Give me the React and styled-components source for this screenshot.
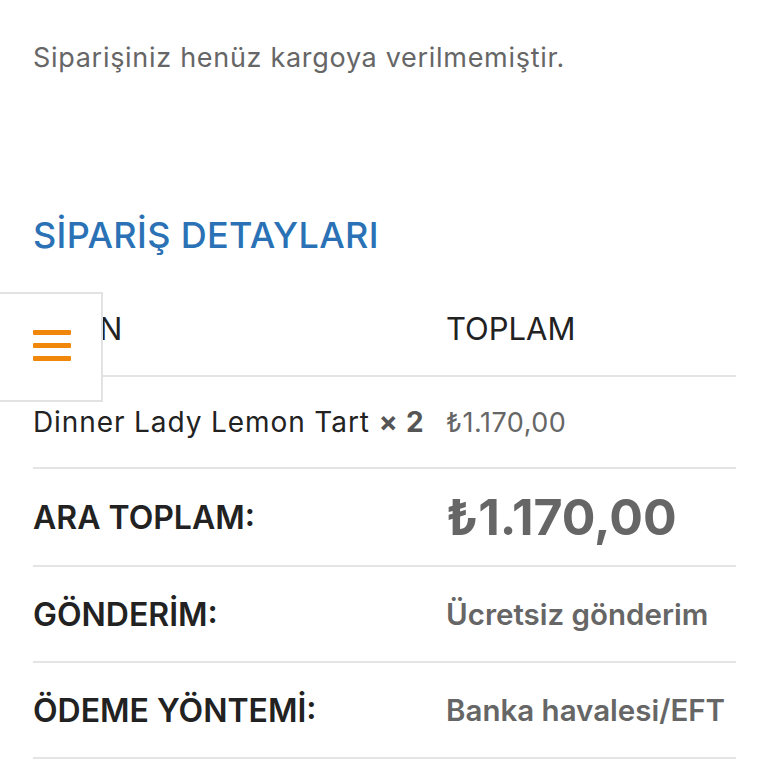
import React from 'react';
import styled, {createGlobalStyle} from 'styled-components';

const GlobalStyle = createGlobalStyle`
  body {
    margin: 0;
    background: #fff;
    font-family: Inter, "Noto Sans", sans-serif;
    overflow: hidden;
  }
`;

const Page = styled.div`
  padding: 38px 32px 0 33px;
`;

const Notice = styled.p`
  margin: 0;
  font-size: 27px;
  line-height: 40px;
  color: #666;
  letter-spacing: 0.7px;
`;

const Heading = styled.h2`
  margin: 134px 0 0;
  font-size: 36px;
  line-height: 46px;
  font-weight: 500;
  color: #2a72b5;
  letter-spacing: 0.35px;
`;

const Table = styled.table`
  width: 703px;
  margin-top: 24px;
  border-collapse: collapse;
`;

const Row = styled.tr`
  height: ${(p) => p.$h}px;
  border-bottom: 2px solid #e4e4e4;
`;

const Cell = styled.td`
  padding: 0;
  width: ${(p) => p.$w || 'auto'};
  vertical-align: middle;
  font-size: ${(p) => p.$size || 27}px;
  font-weight: ${(p) => p.$weight || 400};
  color: ${(p) => p.$color || '#222'};
  letter-spacing: ${(p) => p.$spacing || 0}px;
  white-space: nowrap;
`;

const Qty = styled.strong`
  color: #555;
  font-weight: 700;
`;

const MenuButton = styled.button`
  position: absolute;
  left: -2px;
  top: 292px;
  width: 105px;
  height: 110px;
  background: #fff;
  border: 2px solid #e2e2e2;
  display: flex;
  align-items: center;
  justify-content: center;
  padding: 0 0 0 2px;
`;

const Bar = styled.span`
  display: block;
  width: 38px;
  height: 5px;
  background: #f0870a;
  border-radius: 1px;
`;

const BarStack = styled.span`
  display: flex;
  flex-direction: column;
  gap: 8px;
  margin-top: -4px;
`;

export default function App() {
  return (
    <>
      <GlobalStyle />
      <Page>
        <Notice>Siparişiniz henüz kargoya verilmemiştir.</Notice>
        <Heading>SİPARİŞ DETAYLARI</Heading>
        <Table>
          <tbody>
            <Row $h={94}>
              <Cell $w="413px" $size={31}>ÜRÜN</Cell>
              <Cell $size={31}>TOPLAM</Cell>
            </Row>
            <Row $h={92}>
              <Cell $size={28} $spacing={0.9}>
                Dinner Lady Lemon Tart <Qty>× 2</Qty>
              </Cell>
              <Cell $size={27} $spacing={0.5} $color="#666">₺1.170,00</Cell>
            </Row>
            <Row $h={98}>
              <Cell $weight={600} $size={32}>ARA TOPLAM:</Cell>
              <Cell $weight={700} $size={50} $color="#666">₺1.170,00</Cell>
            </Row>
            <Row $h={96}>
              <Cell $weight={600} $size={32}>GÖNDERİM:</Cell>
              <Cell $weight={600} $size={29.5} $color="#666">Ücretsiz gönderim</Cell>
            </Row>
            <Row $h={96}>
              <Cell $weight={600} $size={32}>ÖDEME YÖNTEMİ:</Cell>
              <Cell $weight={600} $size={29.5} $color="#666">Banka havalesi/EFT</Cell>
            </Row>
          </tbody>
        </Table>
      </Page>
      <MenuButton aria-label="Menü">
        <BarStack>
          <Bar />
          <Bar />
          <Bar />
        </BarStack>
      </MenuButton>
    </>
  );
}
